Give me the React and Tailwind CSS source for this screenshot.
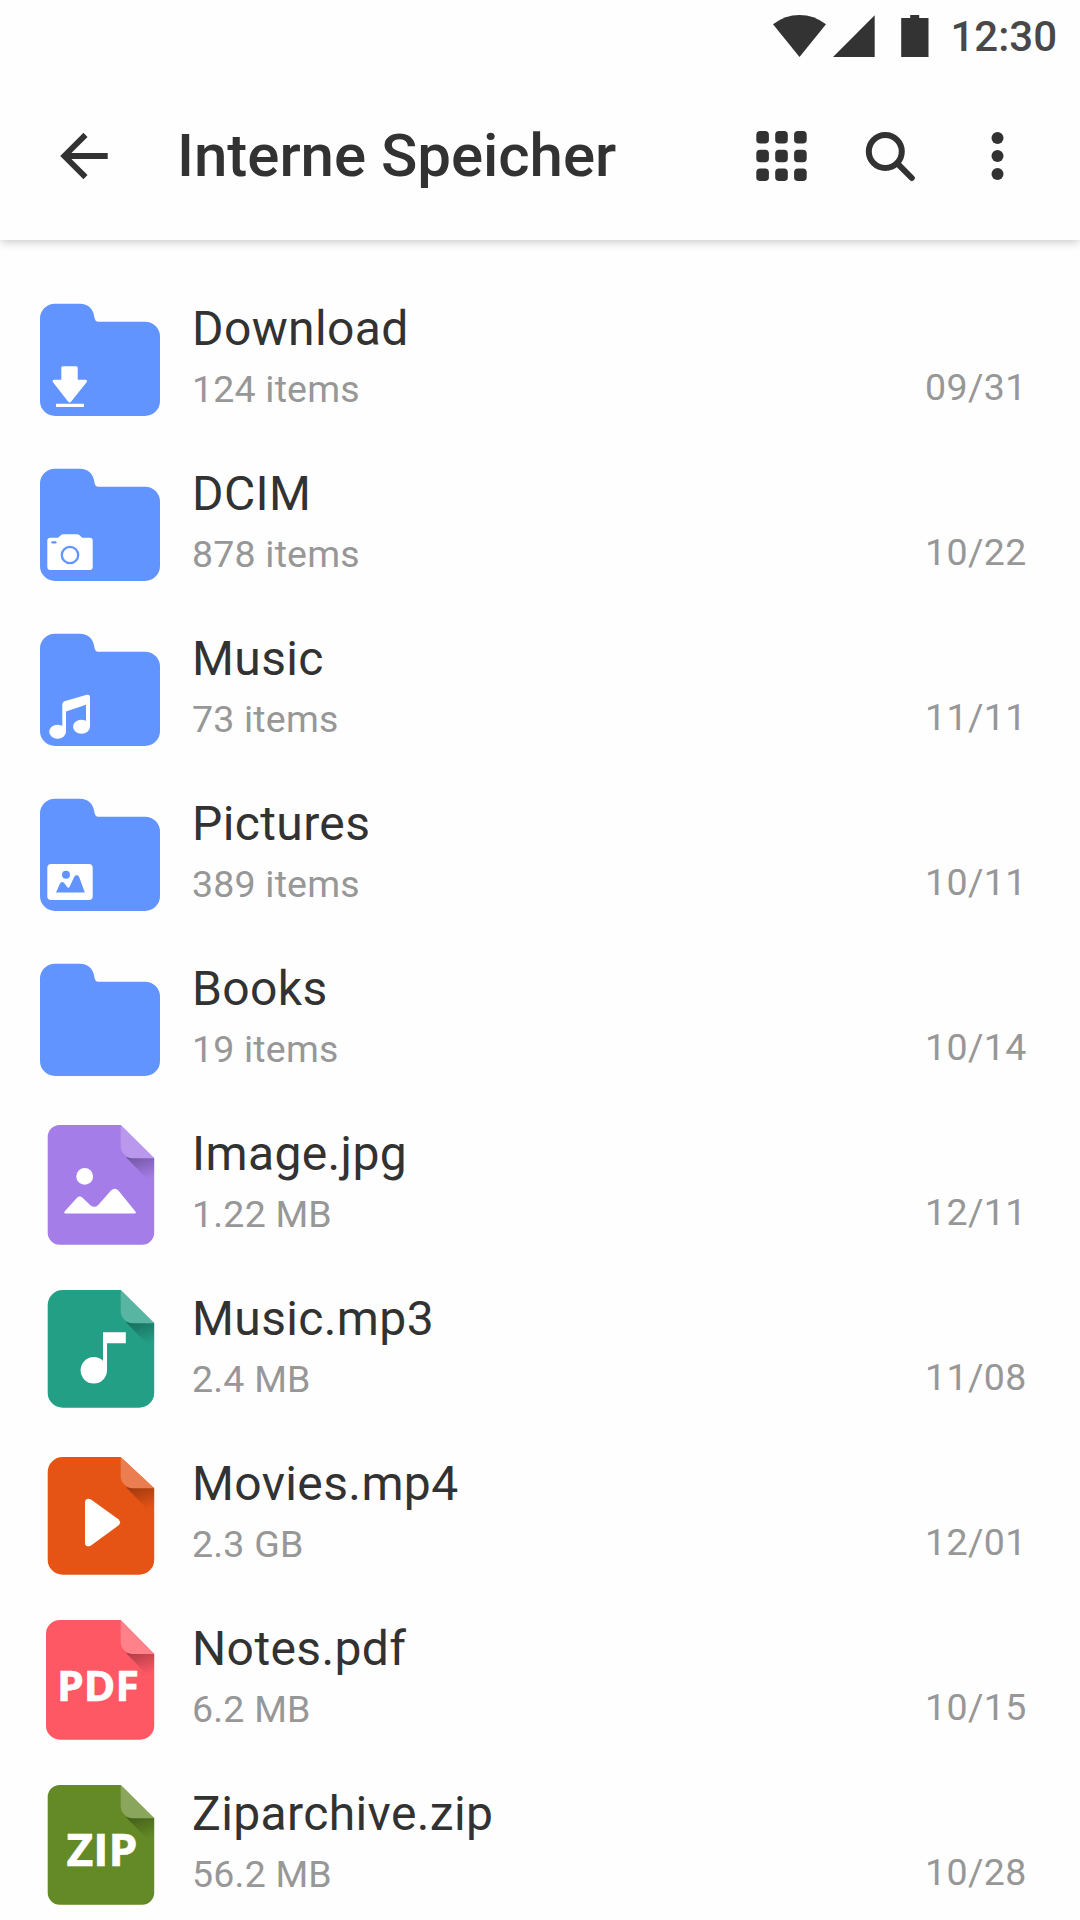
import { useId } from 'react'

const files = [
  { name: 'Download', info: '124 items', date: '09/31', icon: DownloadFolder },
  { name: 'DCIM', info: '878 items', date: '10/22', icon: CameraFolder },
  { name: 'Music', info: '73 items', date: '11/11', icon: MusicFolder },
  { name: 'Pictures', info: '389 items', date: '10/11', icon: PicturesFolder },
  { name: 'Books', info: '19 items', date: '10/14', icon: Folder },
  { name: 'Image.jpg', info: '1.22 MB', date: '12/11', icon: ImageFile },
  { name: 'Music.mp3', info: '2.4 MB', date: '11/08', icon: AudioFile },
  { name: 'Movies.mp4', info: '2.3 GB', date: '12/01', icon: VideoFile },
  { name: 'Notes.pdf', info: '6.2 MB', date: '10/15', icon: PdfFile },
  { name: 'Ziparchive.zip', info: '56.2 MB', date: '10/28', icon: ZipFile },
]

function Folder({ children }) {
  return (
    <svg viewBox="0 0 120 120" className="w-[120px] h-[120px] shrink-0">
      <path
        fill="#6294ff"
        d="M15 3.7H40C48 3.7 53.2 9 54.2 16C54.6 19 55.5 21.7 58 21.7H105A15 15 0 0 1 120 36.7V101A15 15 0 0 1 105 116H15A15 15 0 0 1 0 101V18.7A15 15 0 0 1 15 3.7Z"
      />
      {children}
    </svg>
  )
}

function DownloadFolder() {
  return (
    <Folder>
      <path
        fill="#fff"
        d="M22.8 66.3H36.2Q37.7 66.3 37.7 67.8V79.7H45.2Q48 79.9 46.6 82.3L31.2 101.6Q29.6 103.6 28 101.6L13 82.3Q11.6 79.9 14.2 79.7H21.3V67.8Q21.3 66.3 22.8 66.3Z"
      />
      <rect x="16" y="103.8" width="28" height="3.2" rx="0.5" fill="#fff" />
    </Folder>
  )
}

function CameraFolder() {
  return (
    <Folder>
      <path
        fill="#fff"
        d="M10.3 72.8H17C19.5 72.8 20 69.2 23.5 69.2H37C40.5 69.2 40.5 72.8 43.5 72.8H49.7Q52.7 72.8 52.7 75.8V102Q52.7 105 49.7 105H10.3Q7.3 105 7.3 102V75.8Q7.3 72.8 10.3 72.8Z"
      />
      <rect x="11.2" y="76.2" width="5.4" height="2.4" rx="1" fill="#6294ff" />
      <circle cx="30" cy="90" r="8.2" fill="none" stroke="#6294ff" strokeWidth="2.3" />
    </Folder>
  )
}

function MusicFolder() {
  return (
    <Folder>
      <path
        fill="#fff"
        d="M22.3 97V74.2Q22.3 72 24.4 71.2L46.8 64.8Q50 64.2 50 67V97H46V74.8L26 81.6V102H22.3Z"
      />
      <ellipse cx="17.6" cy="101.8" rx="8.4" ry="7" fill="#fff" />
      <ellipse cx="41.5" cy="96.7" rx="8.5" ry="7" fill="#fff" />
    </Folder>
  )
}

function PicturesFolder() {
  return (
    <Folder>
      <rect x="7.3" y="69" width="45.4" height="36" rx="3.8" fill="#fff" />
      <circle cx="26" cy="79.8" r="4" fill="#6294ff" />
      <path
        fill="#6294ff"
        d="M16 97.5L20 88.6Q21.8 85.8 24.2 88L27.4 92.2Q28.6 93.4 29.6 91.8L34.4 81.6Q36.6 78.2 39 81.6L44.8 97.5Z"
      />
    </Folder>
  )
}

// Sheet with a folded top right corner
function File({ color, fold, left = 7.7, top = 0, bottom = 119.7, foldY = 33.3, radius = 14, children }) {
  const id = useId()
  const r = radius
  return (
    <svg viewBox="0 0 120 120" className="w-[120px] h-[120px] shrink-0">
      <defs>
        <linearGradient id={id} x1="0.2" y1="0" x2="0.55" y2="1">
          <stop offset="0" stopColor="#000" stopOpacity="0.3" />
          <stop offset="0.85" stopColor="#000" stopOpacity="0" />
        </linearGradient>
      </defs>
      <path
        fill={color}
        d={`M${left + r} ${top}H80.7L114.2 ${foldY}V${bottom - r}A${r} ${r} 0 0 1 ${114.2 - r} ${bottom}H${left + r}A${r} ${r} 0 0 1 ${left} ${bottom - r}V${top + r}A${r} ${r} 0 0 1 ${left + r} ${top}Z`}
      />
      <path fill={`url(#${id})`} d={`M86 ${foldY - 1}H114.2V${foldY + 28}Z`} />
      <path
        fill={fold}
        d={`M80.7 ${top}L114.2 ${foldY}H93C86 ${foldY} 80.7 ${foldY - 6} 80.7 ${foldY - 12}Z`}
      />
      {children}
    </svg>
  )
}

function ImageFile() {
  return (
    <File color="#a57de8" fold="#b998ee" radius={12}>
      <circle cx="44.7" cy="51.4" r="8.4" fill="#fff" />
      <path
        fill="#fff"
        d="M24.6 86.6L36.8 73Q39.8 70.2 42.8 73L50.4 80.2Q54.4 83.2 58 80.2L71 65.6Q74.8 62 78.4 65.6L95.6 86.8Q96.6 88.5 95 88.5H25Q23.6 88.3 24.6 86.6Z"
      />
    </File>
  )
}

function AudioFile() {
  return (
    <File color="#239f86" fold="#58b5a2" bottom={117.7} radius={15}>
      <circle cx="53.8" cy="80.3" r="13.2" fill="#fff" />
      <path fill="#fff" d="M63 42.2H85.8V53.2H67V80.3H63Z" />
    </File>
  )
}

function VideoFile() {
  return (
    <File color="#e55315" fold="#eb7e50" top={2} radius={15}>
      <path
        fill="#fff"
        d="M45 47.3C45 43.8 48.2 42.6 51 44.6L78.4 64.2Q81.8 67.5 78.4 70.6L51 90.4C48.2 92.4 45 91.2 45 87.7Z"
      />
    </File>
  )
}

function PdfFile() {
  return (
    <File color="#ff5865" fold="#ff828b" left={6} foldY={34}>
      <text
        x="17"
        y="81"
        fill="#fff"
        stroke="#fff"
        strokeWidth="0.6"
        textLength="82"
        lengthAdjust="spacingAndGlyphs"
        className="font-['Open_Sans',sans-serif] font-bold text-[40.5px]"
      >
        PDF
      </text>
    </File>
  )
}

function ZipFile() {
  return (
    <File color="#638a26" fold="#8aa65c" radius={12}>
      <text
        x="26.5"
        y="80.7"
        fill="#fff"
        stroke="#fff"
        strokeWidth="0.6"
        textLength="71"
        lengthAdjust="spacingAndGlyphs"
        className="font-['Open_Sans',sans-serif] font-bold text-[44.5px]"
      >
        ZIP
      </text>
    </File>
  )
}

function StatusBar() {
  return (
    <div className="h-[60px] flex items-start justify-end pr-[23px] text-[#333333]">
      <svg viewBox="773 0 157 60" className="w-[157px] h-[60px]" fill="currentColor">
        <path d="M773 24.3Q785 15 799.5 15T826 24.3L799.5 57Z" />
        <path d="M833 57H874.7V15.3Z" />
        <path d="M901.2 18H910.2V15H919.2V18H928.5V57H901.2Z" />
      </svg>
      <span className="ml-[20px] mt-[12px] leading-[49px] text-[42px] font-medium text-[#484848]">12:30</span>
    </div>
  )
}

function Toolbar() {
  return (
    <div className="h-[180px] pt-3 pl-[60px] pr-[76px] flex items-center text-[#323232]">
      <svg viewBox="60.5 132 49 48" className="w-[49px] h-12" fill="none" stroke="currentColor" strokeWidth="5.8">
        <path d="M108.2 156H64M86 134.9L64.8 156L86 177.1" />
      </svg>
      <h1 className="ml-[68px] flex-1 text-[60px] leading-[70px] tracking-[-0.03px] font-medium">
        Interne Speicher
      </h1>
      <svg viewBox="756 130 51 52" className="w-[51px] h-[52px]" fill="currentColor">
        {[131, 149.7, 168.4].map((y) =>
          [756.3, 775.2, 794.1].map((x) => (
            <rect key={`${x}-${y}`} x={x} y={y} width="12.6" height="12.6" rx="3.8" />
          ))
        )}
      </svg>
      <svg
        viewBox="865 130 51 52"
        className="ml-[58px] w-[51px] h-[52px]"
        fill="none"
        stroke="currentColor"
        strokeWidth="6"
        strokeLinecap="round"
      >
        <circle cx="885.3" cy="151.5" r="16.5" />
        <path d="M898 164.2L911.8 178" />
      </svg>
      <svg viewBox="991 130 13 52" className="ml-[75px] w-[13px] h-[52px]" fill="currentColor">
        <circle cx="997.5" cy="138" r="6" />
        <circle cx="997.5" cy="156" r="6" />
        <circle cx="997.5" cy="174" r="6" />
      </svg>
    </div>
  )
}

function FileRow({ file }) {
  const Icon = file.icon
  return (
    <li className="h-[165px] flex items-start">
      <Icon />
      <div className="ml-8 flex-1">
        <p className="text-[48px] leading-[57px] tracking-[0.38px] text-[#323232]">{file.name}</p>
        <p className="mt-[10px] text-[37.5px] leading-[44px] tracking-[0.2px] text-[#979797]">{file.info}</p>
      </div>
      <span className="mt-[65px] w-[117px] text-[37.5px] leading-[44px] tracking-[0.4px] text-[#979797]">
        {file.date}
      </span>
    </li>
  )
}

export default function App() {
  return (
    <div className="w-[1080px] h-[1920px] overflow-hidden flex flex-col bg-[#fefefe] font-[Roboto,sans-serif]">
      <header className="h-[240px] shrink-0 bg-[#fefefe] shadow-[0_3px_9px_-1px_rgba(0,0,0,0.22)]">
        <StatusBar />
        <Toolbar />
      </header>
      <ul className="pt-[60px] pl-10 pr-[38px]">
        {files.map((file) => (
          <FileRow key={file.name} file={file} />
        ))}
      </ul>
    </div>
  )
}
